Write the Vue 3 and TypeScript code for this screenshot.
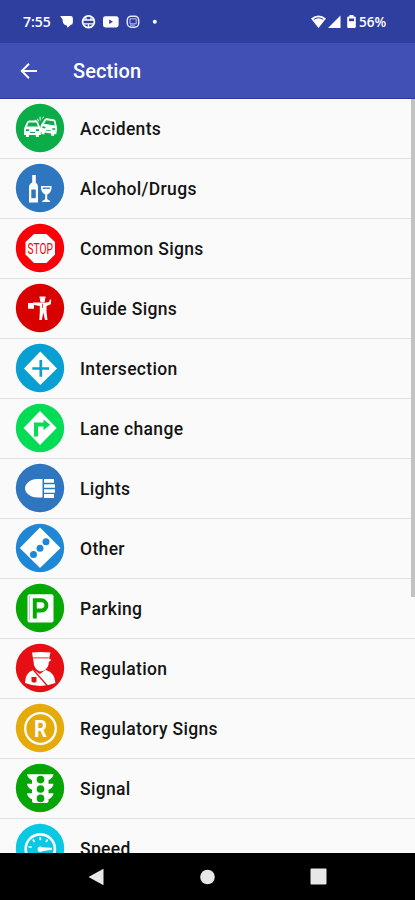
<script setup lang="ts">
interface Section {
  id: string
  label: string
  color: string
}

const sections: Section[] = [
  { id: 'accidents', label: 'Accidents', color: '#0bad48' },
  { id: 'alcohol', label: 'Alcohol/Drugs', color: '#2f76c0' },
  { id: 'common', label: 'Common Signs', color: '#fb0007' },
  { id: 'guide', label: 'Guide Signs', color: '#d90000' },
  { id: 'intersection', label: 'Intersection', color: '#08a0d2' },
  { id: 'lane', label: 'Lane change', color: '#05dc55' },
  { id: 'lights', label: 'Lights', color: '#2f76c0' },
  { id: 'other', label: 'Other', color: '#1e88d6' },
  { id: 'parking', label: 'Parking', color: '#05a805' },
  { id: 'regulation', label: 'Regulation', color: '#e60f14' },
  { id: 'regulatory', label: 'Regulatory Signs', color: '#e5ab0a' },
  { id: 'signal', label: 'Signal', color: '#05a505' },
  { id: 'speed', label: 'Speed', color: '#08c8e2' },
]
</script>

<template>
  <div class="screen">
    <header class="status">
      <span class="clock">7:55</span>
      <svg class="notifications" viewBox="0 0 100 16" width="100" height="16">
        <path d="M2.500 2h8q2.400 0 2.400 2.400v3.800q0 2.400-2.400 2.800L7.600 13.800l-.8-2.400Q3.300 11 2.700 7.500V5.800L.2 2z" fill="#fff" />
        <circle cx="28.500" cy="7.700" r="5.900" fill="none" stroke="#fff" stroke-width="1.800" />
        <path d="M23 6h11M24 9.800h9M28.500 9.500V13M26 3.200v3M31 3.200v3" stroke="#fff" stroke-width="1.300" />
        <rect x="43" y="2.200" width="15.600" height="11.200" rx="2.400" fill="#fff" />
        <path d="M49.200 5.500v4.600l3.800-2.300z" fill="#2f3f9f" />
        <rect x="67.300" y="2.200" width="11.400" height="11" rx="4" fill="none" stroke="#e4e7ff" stroke-width="1.500" />
        <path d="M70 4.800h6.200v5H70zM70 11.200h5" fill="none" stroke="#e4e7ff" stroke-opacity=".75" />
        <circle cx="94.800" cy="7.700" r="2" fill="#fff" />
      </svg>
      <svg class="signals" viewBox="0 0 48 16" width="48" height="16">
        <path d="M0 4.600Q7.500-1.600 15 4.600L7.500 14z" fill="#fff" />
        <path d="M2.800 5.400q4.700-3.200 9.400 0" fill="none" stroke="#2f3f9f" stroke-width="1" />
        <path d="M17 14L29.500 1.500V14z" fill="#fff" />
        <path d="M38.500 1h4v1.500h1q1.300 0 1.300 1.300v8.900q0 1.300-1.300 1.300h-6q-1.300 0-1.300-1.300V3.800q0-1.300 1.300-1.300h1z" fill="#fff" />
        <path d="M38 4.500h5v2.700h-5z" fill="#2f3f9f" />
      </svg>
      <span class="percent">56%</span>
    </header>

    <div class="toolbar">
      <svg class="back" viewBox="0 0 18 18" width="18" height="18">
        <path d="M17 9H2M9 1.800L1.800 9L9 16.200" fill="none" stroke="#fff" stroke-width="2" />
      </svg>
      <h1 class="title">Section</h1>
    </div>

    <main class="content">
      <ul class="list">
        <li v-for="s in sections" :key="s.id" class="row">
          <svg class="icon" viewBox="0 0 48 48" width="48" height="48" fill="#fff">
            <circle cx="24" cy="24" r="24.200" :fill="s.color" />

            <g v-if="s.id === 'accidents'">
              <path d="M8.500 23.500L11 18q.7-1.500 2.300-1.500h6.400q1.600 0 2.300 1.500l2.200 5.500 .6 2V31h-2v2h-3v-2h-6.800v2H10v-2H8v-5.500z" />
              <path d="M11 22.500l1.600-3.900h7.800l1.600 3.900zM10 25.300h3v1.700h-3zM20 25.300h3v1.700h-3zM14 28h5v.9h-5z" :fill="s.color" />
              <g transform="translate(16.500 -2) rotate(9 16 25)">
                <path d="M8.500 23.500L11 18q.7-1.500 2.300-1.500h6.400q1.600 0 2.300 1.500l2.200 5.500 .6 2V31h-2v2h-3v-2h-6.800v2H10v-2H8v-5.500z" />
                <path d="M11 22.500l1.600-3.900h7.800l1.600 3.900zM10 25.300h3v1.700h-3zM20 25.300h3v1.700h-3zM14 28h5v.9h-5z" :fill="s.color" />
              </g>
              <path d="M22.500 17.500l-1-2.800M24.200 16.500l-.2-3.800M26 14.500l2-1.700M20.800 17l-2-1" fill="none" stroke="#fff" stroke-width="1" />
            </g>

            <g v-else-if="s.id === 'alcohol'">
              <path d="M16.200 11h3.600v7.500q2.200 1.500 2.200 4.500v15.500H13V23q0-3 3.200-4.500z" />
              <path d="M15.300 25.500h4.500v8.700h-4.500z" :fill="s.color" />
              <path d="M25 22h10.500q.7 6.500-4.300 8.500v4.700l3 1.700v1h-8v-1l3-1.700v-4.700q-4.700-2-4.200-8.500z" />
              <path d="M26.800 23.500h7l.1 1.600q-3.500-.7-7.200 0z" :fill="s.color" />
            </g>

            <g v-else-if="s.id === 'common'">
              <path d="M18 10h12.500l8.500 8v12.500L30.500 39H18l-8.500-8.500V18z" />
              <text x="24.200" y="29.500" class="stop" textLength="25.500" lengthAdjust="spacingAndGlyphs">STOP</text>
            </g>

            <g v-else-if="s.id === 'guide'">
              <circle cx="26.500" cy="15.700" r="2.600" />
              <path d="M23.500 12.500h6v2h-6zM12 19h6v5.700h-6z" />
              <path d="M17 18.600h13.500l2.500-.5 1-2.600h1.300l-.5 4.800-4.300 1.700V28l1 8h-2.500l-1.700-7.500-1.500 7.500h-2.500l.5-8v-6l-6.800-1.300z" />
              <path d="M26.500 19.800V24" stroke="#d90000" stroke-width=".7" />
            </g>

            <g v-else-if="s.id === 'intersection'">
              <path d="M24.300 7.500L41 24.500L24.300 41L8 24.500z" />
              <path d="M24.800 16v16.800M16.300 24.500h16.800" :stroke="s.color" stroke-width="2.700" />
            </g>

            <g v-else-if="s.id === 'lane'">
              <path d="M24 7L40.700 24L24 41L7.500 24z" />
              <path d="M20 32.500V20.500h8.500" fill="none" :stroke="s.color" stroke-width="4" />
              <path d="M27.500 15.500l6.700 5.300l-6.700 5.400z" :fill="s.color" />
            </g>

            <g v-else-if="s.id === 'lights'">
              <path d="M26.500 15v18.500h-5C14 33.500 9 28.800 9 24.300S14 15 21.500 15z" />
              <path d="M28 15h10v3.800H28zM28 20.300h11v3.500H28zM28 25.300h11v3.500H28zM28 30.100h10V34H28z" />
            </g>

            <g v-else-if="s.id === 'other'">
              <path d="M24 3.500L44.500 24L24 44L3.800 24z" />
              <g :fill="s.color">
                <circle cx="17.500" cy="30.500" r="3.500" />
                <circle cx="24" cy="24.200" r="3.500" />
                <circle cx="30" cy="17.800" r="3.500" />
              </g>
            </g>

            <g v-else-if="s.id === 'parking'">
              <rect x="11.500" y="10.200" width="26" height="28.300" rx="2" />
              <path d="M18.800 34.500V16.300h6.500a4.700 4.700 0 0 1 0 10.200h-6.500" fill="none" :stroke="s.color" stroke-width="4" />
              <path d="M13.500 12v24.500" :stroke="s.color" stroke-width=".6" opacity=".6" />
            </g>

            <g v-else-if="s.id === 'regulation'">
              <path d="M16 8.500q8.500-1 18.500 0l-1.200 4.800v2h1.500v1.200l-2 1.500q0 6-5.300 8.700l-3.500.8q-6.500-2.500-6.500-10.500z" />
              <path d="M17.200 13.900h15.500" :stroke="s.color" stroke-width=".9" />
              <path d="M17.500 25.800l6.500 4.300 5.500-4.300q9.500 3.200 9.900 13.200Q24 45 9 39q0-10 8.500-13.200z" />
              <path d="M17.500 26l14.500 16.500" :stroke="s.color" stroke-width="1.300" />
              <path d="M15.500 33h5v4.800l-2.500 1-2.500-1z" :fill="s.color" />
            </g>

            <g v-else-if="s.id === 'regulatory'">
              <circle cx="24.500" cy="24.500" r="15.300" fill="none" stroke="#fff" stroke-width="2.300" />
              <text x="24.500" y="32.700" class="letter" textLength="13" lengthAdjust="spacingAndGlyphs">R</text>
            </g>

            <g v-else-if="s.id === 'signal'">
              <path d="M11 10.200h26.500q-.5 3.700-5 6v3.500h5q-.5 4-5 6v3.500h5q-.5 4.200-5 6v2q0 1.800-2 1.800H18q-2 0-2-1.800v-2q-4.500-1.800-5-6h5v-3.500q-4.500-2-5-6h5v-3.500q-4.500-2.300-5-6z" />
              <g :fill="s.color">
                <circle cx="24.500" cy="15.600" r="3.800" />
                <circle cx="24.500" cy="25" r="3.800" />
                <circle cx="24.500" cy="34.400" r="3.800" />
              </g>
            </g>

            <g v-else>
              <circle cx="24.300" cy="25" r="14.600" fill="none" stroke="#fff" stroke-width="2.600" />
              <path d="M24.300 13v3.300M17 15.500l1.500 2.500M31.500 15.500L30 18M12.500 23h3.300" stroke="#fff" stroke-width="1.700" />
              <path d="M24 23.300l12 .5v2L24 27.500z" />
              <circle cx="24.300" cy="25.200" r="2.700" />
            </g>
          </svg>
          <span class="label">{{ s.label }}</span>
        </li>
      </ul>
      <div class="scrollbar"></div>
    </main>

    <nav class="navbar">
      <svg viewBox="0 0 16 18" width="16" height="18"><path d="M.5 9L15.500 .8v16.400z" fill="#e8e8e8" /></svg>
      <svg viewBox="0 0 16 16" width="16" height="16"><circle cx="8.500" cy="8" r="7.300" fill="#e8e8e8" /></svg>
      <svg viewBox="0 0 17 17" width="17" height="17"><rect x=".5" y=".5" width="16" height="16" rx="1" fill="#e8e8e8" /></svg>
    </nav>
  </div>
</template>

<style>
body {
  margin: 0;
  overflow: hidden;
}
</style>

<style scoped>
.screen {
  display: flex;
  flex-direction: column;
  width: 415px;
  height: 900px;
  overflow: hidden;
  background: #fafafa;
  font-family: Roboto, "Liberation Sans", sans-serif;
}
.status {
  display: flex;
  align-items: center;
  flex: none;
  box-sizing: border-box;
  height: 43px;
  padding: 0 28px 0 23px;
  background: #2f3f9f;
  color: #fff;
  font-family: "Open Sans", Roboto, sans-serif;
  font-size: 14px;
  font-weight: 600;
}
.clock {
  width: 37px;
}
.signals {
  margin-left: auto;
}
.percent {
  width: 28px;
  font-size: 13.5px;
}
.toolbar {
  display: flex;
  align-items: center;
  flex: none;
  box-sizing: border-box;
  height: 56px;
  padding-left: 20px;
  border-bottom: 1px solid #2b3ca6;
  background: #4150b5;
}
.title {
  margin: 1px 0 0 35px;
  color: #fff;
  font-size: 20px;
  font-weight: 500;
  letter-spacing: 0.1px;
  line-height: 24px;
}
.content {
  position: relative;
  flex: 1;
  min-height: 0;
  overflow: hidden;
}
.list {
  margin: 0;
  padding: 0;
  list-style: none;
}
.row {
  display: flex;
  align-items: center;
  gap: 16px;
  box-sizing: border-box;
  height: 60px;
  padding-left: 16px;
  border-bottom: 1px solid #e0e0e0;
}
.icon {
  margin-top: -1px;
  overflow: visible;
}
.label {
  color: #141414;
  font-size: 17.5px;
  font-weight: 500;
  letter-spacing: 0.34px;
  line-height: 24px;
}
.stop {
  fill: #fb0007;
  font-size: 14.5px;
  font-weight: 400;
  text-anchor: middle;
}
.letter {
  font-size: 23px;
  font-weight: 700;
  text-anchor: middle;
}
.scrollbar {
  position: absolute;
  top: 0;
  right: 0;
  width: 4px;
  height: 498px;
  background: #c2c2c2;
}
.navbar {
  display: flex;
  align-items: center;
  justify-content: space-between;
  flex: none;
  box-sizing: border-box;
  height: 47px;
  padding: 0 88px;
  background: #000;
}
</style>
